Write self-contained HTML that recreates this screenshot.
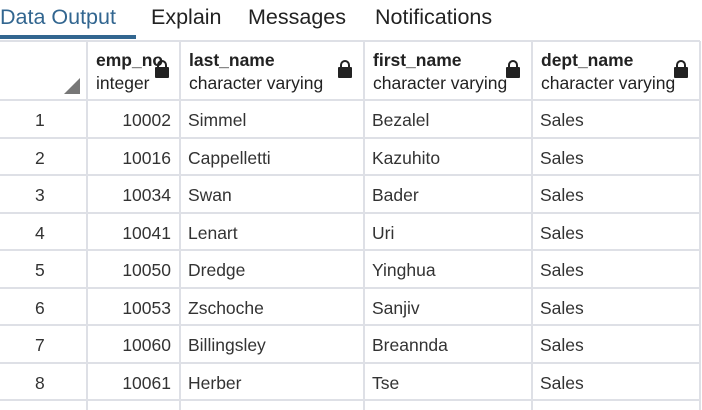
<!DOCTYPE html>
<html><head><style>
body{margin:0;width:702px;height:410px;overflow:hidden;background:#fff;font-family:"Liberation Sans",Arial,sans-serif;position:relative}
.tab{position:absolute;top:5px;font-size:21.5px;color:#222;white-space:nowrap}
.ul{position:absolute;left:0;top:35px;width:136px;height:4px;background:#326690}
.v{position:absolute;top:41px;width:2px;height:369px;background:#dee0e6}
.h{position:absolute;left:0;width:700px;height:2px;background:#dee0e6}
.t{position:absolute;font-size:17.5px;color:#333;white-space:nowrap}
.hn{position:absolute;top:50px;font-size:17.5px;font-weight:bold;color:#222;white-space:nowrap}
.ht{position:absolute;top:73px;font-size:17.5px;color:#222;white-space:nowrap}
.lock{position:absolute;width:14px;height:11px;background:#222;border-radius:1px}
.lock:before{content:"";position:absolute;left:2px;top:-7px;width:6px;height:7px;border:2px solid #222;border-bottom:none;border-radius:5px 5px 0 0}
</style></head><body>
<div class="tab" style="left:0;color:#326690">Data Output</div>
<div class="tab" style="left:151px">Explain</div>
<div class="tab" style="left:248px">Messages</div>
<div class="tab" style="left:375px">Notifications</div>
<div class="ul"></div>
<div class="h" style="top:40px;height:2px"></div>
<div class="h" style="top:99px"></div>
<div class="h" style="top:137px"></div>
<div class="h" style="top:174px"></div>
<div class="h" style="top:212px"></div>
<div class="h" style="top:249px"></div>
<div class="h" style="top:287px"></div>
<div class="h" style="top:324px"></div>
<div class="h" style="top:362px"></div>
<div class="h" style="top:399px"></div>
<div class="v" style="left:86px"></div>
<div class="v" style="left:179px"></div>
<div class="v" style="left:363px"></div>
<div class="v" style="left:531px"></div>
<div class="v" style="left:699px"></div>
<svg style="position:absolute;left:64px;top:78px" width="16" height="16"><polygon points="16,0 16,16 0,16" fill="#777"/></svg>
<div class="hn" style="left:96px">emp_no</div><div class="ht" style="left:96px">integer</div>
<div class="hn" style="left:189px">last_name</div><div class="ht" style="left:189px">character varying</div>
<div class="hn" style="left:373px">first_name</div><div class="ht" style="left:373px">character varying</div>
<div class="hn" style="left:541px">dept_name</div><div class="ht" style="left:541px">character varying</div>
<div class="lock" style="left:155px;top:67px"></div>
<div class="lock" style="left:338px;top:67px"></div>
<div class="lock" style="left:506px;top:67px"></div>
<div class="lock" style="left:674px;top:67px"></div>
<div id="rows"></div>
<script>
var d=[["10002","Simmel","Bezalel"],["10016","Cappelletti","Kazuhito"],["10034","Swan","Bader"],["10041","Lenart","Uri"],["10050","Dredge","Yinghua"],["10053","Zschoche","Sanjiv"],["10060","Billingsley","Breannda"],["10061","Herber","Tse"]];
var h="";d.forEach(function(r,i){var y=110+i*37.5;
h+='<div class="t" style="left:35px;top:'+y+'px">'+(i+1)+'</div>';
h+='<div class="t" style="right:531px;top:'+y+'px">'+r[0]+'</div>';
h+='<div class="t" style="left:188px;top:'+y+'px">'+r[1]+'</div>';
h+='<div class="t" style="left:372px;top:'+y+'px">'+r[2]+'</div>';
h+='<div class="t" style="left:540px;top:'+y+'px">Sales</div>';});
document.getElementById("rows").innerHTML=h;
</script>
</body></html>
